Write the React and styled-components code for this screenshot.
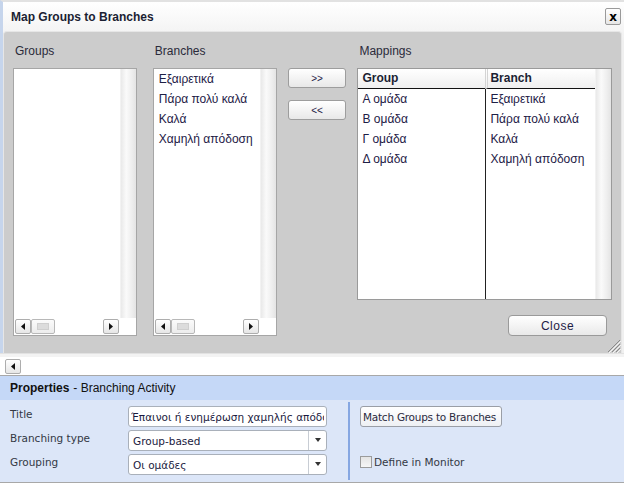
import React from 'react';
import styled, { createGlobalStyle } from 'styled-components';

const GlobalStyle = createGlobalStyle`
  html, body { margin: 0; padding: 0; background: #ffffff; }
  body {
    width: 624px; height: 484px; overflow: hidden;
    font-family: "Liberation Sans", Arial, sans-serif;
  }
  * { box-sizing: border-box; }
`;

const Screen = styled.div`
  width: 624px;
  height: 484px;
  display: flex;
  flex-direction: column;
  overflow: hidden;
`;

const Dialog = styled.div`
  height: 353px;
  display: flex;
  flex-direction: column;
  border-left: 3px solid #c6d5ec;
  border-top: 2px solid #e2e2e2;
  background: linear-gradient(#ffffff, #f0f0f0 40px);
`;

const TitleBar = styled.div`
  height: 29px;
  display: flex;
  align-items: center;
  justify-content: space-between;
  padding: 0 3px 0 8px;
`;

const Title = styled.div`
  font-weight: bold;
  font-size: 12px;
  color: #1b1f33;
`;

const CloseX = styled.div`
  width: 16px;
  height: 17px;
  border: 1px solid #9a9a9a;
  border-radius: 2px;
  background: linear-gradient(#ffffff, #e6e6e6);
  display: flex;
  align-items: center;
  justify-content: center;
  font: bold 12px "DejaVu Sans", sans-serif;
  color: #000;
`;

const Body = styled.div`
  position: relative;
  flex: 1;
  margin-right: 2px;
  background: #cccccc;
  border: 1px solid #e6e6e6;
  border-bottom: none;
  border-radius: 4px 4px 0 0;
  padding: 12px 9px 0 9px;
  display: flex;
  align-items: flex-start;
`;

const Column = styled.div`
  width: ${p => p.$w}px;
  margin-right: ${p => p.$mr || 0}px;
  display: flex;
  flex-direction: column;
`;

const Label = styled.div`
  height: 14px;
  line-height: 15px;
  margin-bottom: 10px;
  padding-left: 2px;
  font-size: 12px;
  color: #2a2a3a;
`;

const ListBox = styled.div`
  height: 268px;
  border: 1px solid #a6a6a6;
  background: #ffffff;
  display: grid;
  grid-template-columns: 1fr 16px;
  grid-template-rows: 1fr 17px;
`;

const Items = styled.div`
  padding: 0 5px;
`;

const Item = styled.div`
  height: 20px;
  line-height: 20px;
  font-size: 12px;
  color: #1e2046;
  white-space: nowrap;
`;

const VTrack = styled.div`
  background: linear-gradient(to right, #e9e9e9, #fafafa 35%, #efefef 70%, #e4e4e4);
  border-left: 1px solid #f2f2f2;
`;

const HBar = styled.div`
  display: flex;
  align-items: center;
  padding: 1px;
`;

const ArrowBtn = styled.div`
  width: 16px;
  height: 15px;
  border: 1px solid #adadad;
  border-radius: 2px;
  background: linear-gradient(#ffffff, #e6e6e6);
  display: flex;
  align-items: center;
  justify-content: center;
  flex-shrink: 0;
`;

const Thumb = styled.div`
  width: 24px;
  height: 15px;
  border: 1px solid #b8b8b8;
  border-radius: 2px;
  background: linear-gradient(#fbfbfb, #ececec);
  display: flex;
  align-items: center;
  justify-content: center;
  &::after {
    content: "";
    width: 10px;
    height: 5px;
    background: #dcdcdc;
    border: 1px solid #cfcfcf;
  }
`;

const Spacer = styled.div`
  flex: 1;
`;

const Corner = styled.div`
  background: #ffffff;
`;

const MoveButtons = styled.div`
  margin-top: 24px;
  display: flex;
  flex-direction: column;
  gap: 12px;
`;

const SmallButton = styled.div`
  height: 20px;
  border: 1px solid #9d9d9d;
  border-radius: 3px;
  background: linear-gradient(#ffffff, #e8e8e8);
  display: flex;
  align-items: center;
  justify-content: center;
  font: 10px "Liberation Sans", Arial, sans-serif;
  color: #1e2046;
`;

const Table = styled.div`
  height: 232px;
  border: 1px solid #9a9a9a;
  background: #ffffff;
  display: grid;
  grid-template-columns: 127px 1fr 16px;
  grid-template-rows: 20px 1fr;
`;

const HeadCell = styled.div`
  background: linear-gradient(#ffffff, #efefef);
  border-bottom: 1px solid #111;
  border-left: ${p => (p.$divider ? '3px double #d4d4d4' : 'none')};
  padding-left: ${p => (p.$divider ? 2 : 4)}px;
  font-weight: bold;
  font-size: 12px;
  line-height: 18px;
  color: #1b1f33;
`;

const DataCol = styled.div`
  border-left: ${p => (p.$divider ? '1px solid #222' : 'none')};
  padding-left: 4px;
`;

const TableTrack = styled(VTrack)`
  grid-row: 1 / span 2;
  grid-column: 3;
`;

const CloseButton = styled.div`
  align-self: flex-end;
  margin: 15px 5px 0 0;
  width: 99px;
  height: 21px;
  border: 1px solid #9a9a9a;
  border-radius: 4px;
  background: linear-gradient(#ffffff, #e9e9e9);
  display: flex;
  align-items: center;
  justify-content: center;
  font-size: 12px;
  color: #1e2046;
  letter-spacing: 0.5px;
`;

const Grip = styled.svg`
  position: absolute;
  right: 0;
  bottom: 0;
`;

const PageScroll = styled.div`
  height: 23px;
  border-top: 1px solid #e2e2e2;
  border-bottom: 1px solid #a8a8a8;
  background: linear-gradient(#f3f3f3 0, #f3f3f3 3px, #ffffff 3px);
  display: flex;
  align-items: center;
  padding: 3px 0 0 5px;
`;

const PropsHeader = styled.div`
  height: 24px;
  background: #c5d8f7;
  display: flex;
  align-items: center;
  padding-left: 10px;
  font-size: 12px;
  color: #111;
  b { font-weight: bold; margin-right: 4px; }
`;

const PropsPanel = styled.div`
  flex: 1;
  background: #dce6f8;
  border-bottom: 1px solid #a8a8a8;
  margin-bottom: 1px;
  display: flex;
  font-family: "DejaVu Sans", Verdana, sans-serif;
  font-size: 10.5px;
`;

const FormLeft = styled.div`
  width: 348px;
  padding: 6px 0 0 10px;
  display: grid;
  grid-template-columns: 118px 199px;
  grid-auto-rows: 21px;
  row-gap: 3px;
  align-content: start;
`;

const FieldLabel = styled.div`
  line-height: 16px;
  color: #333844;
`;

const TextField = styled.input`
  width: 199px;
  height: 21px;
  border: 1px solid #a9b0ba;
  border-radius: 3px;
  background: #ffffff;
  padding: 0 2px;
  font: inherit;
  color: #1a1a40;
  outline: none;
`;

const Select = styled.div`
  height: 21px;
  border: 1px solid #a9b0ba;
  border-radius: 3px;
  background: #ffffff;
  display: flex;
  align-items: center;
  color: #1a1a40;
  span { flex: 1; padding-left: 4px; white-space: nowrap; }
`;

const DropBtn = styled.div`
  width: 18px;
  height: 100%;
  border-left: 1px solid #c8cdd4;
  display: flex;
  align-items: center;
  justify-content: center;
`;

const FormRight = styled.div`
  margin: 2px 0 2px;
  border-left: 2px solid #86a7e2;
  padding: 4px 0 0 10px;
  display: flex;
  flex-direction: column;
  align-items: flex-start;
`;

const MatchButton = styled.div`
  height: 21px;
  padding: 0 5px 0 2px;
  border: 1px solid #9a9ea6;
  border-radius: 3px;
  background: linear-gradient(#ffffff, #eef0f4);
  display: flex;
  align-items: center;
  color: #2a2a40;
  letter-spacing: -0.25px;
`;

const CheckRow = styled.label`
  margin-top: 29px;
  display: flex;
  align-items: center;
  color: #333844;
`;

const CheckBox = styled.span`
  width: 12px;
  height: 12px;
  margin-right: 2px;
  border: 1px solid #9b9b9b;
  background: linear-gradient(#e4e4e4, #f6f6f6);
`;

const Tri = ({ dir }) => (
  <svg width="6" height="7" viewBox="0 0 6 7">
    {dir === 'left' && <path d="M5 0 L1 3.5 L5 7 Z" fill="#111" />}
    {dir === 'right' && <path d="M1 0 L5 3.5 L1 7 Z" fill="#111" />}
    {dir === 'down' && <path d="M0 1 L6 1 L3 5 Z" fill="#333" />}
  </svg>
);

function ScrollList({ items = [] }) {
  return (
    <ListBox>
      <Items>
        {items.map(t => <Item key={t}>{t}</Item>)}
      </Items>
      <VTrack />
      <HBar>
        <ArrowBtn><Tri dir="left" /></ArrowBtn>
        <Thumb />
        <Spacer />
        <ArrowBtn><Tri dir="right" /></ArrowBtn>
      </HBar>
      <Corner />
    </ListBox>
  );
}

const branches = ['Εξαιρετικά', 'Πάρα πολύ καλά', 'Καλά', 'Χαμηλή απόδοση'];
const groups = ['Α ομάδα', 'Β ομάδα', 'Γ ομάδα', 'Δ ομάδα'];

export default function App() {
  return (
    <>
      <GlobalStyle />
      <Screen>
        <Dialog>
          <TitleBar>
            <Title>Map Groups to Branches</Title>
            <CloseX>x</CloseX>
          </TitleBar>
          <Body>
            <Column $w={124} $mr={16}>
              <Label>Groups</Label>
              <ScrollList />
            </Column>
            <Column $w={124} $mr={11}>
              <Label>Branches</Label>
              <ScrollList items={branches} />
            </Column>
            <Column $w={59} $mr={11}>
              <MoveButtons>
                <SmallButton>&gt;&gt;</SmallButton>
                <SmallButton>&lt;&lt;</SmallButton>
              </MoveButtons>
            </Column>
            <Column $w={255}>
              <Label>Mappings</Label>
              <Table>
                <HeadCell>Group</HeadCell>
                <HeadCell $divider>Branch</HeadCell>
                <TableTrack />
                <DataCol>
                  {groups.map(t => <Item key={t}>{t}</Item>)}
                </DataCol>
                <DataCol $divider>
                  {branches.map(t => <Item key={t}>{t}</Item>)}
                </DataCol>
              </Table>
              <CloseButton>Close</CloseButton>
            </Column>
            <Grip width="16" height="16" viewBox="0 0 16 16">
              <path d="M15 3 L3 15 M15 7 L7 15 M15 11 L11 15" stroke="#8a8a8a" strokeWidth="1" />
              <path d="M16 4 L4 16 M16 8 L8 16 M16 12 L12 16" stroke="#f4f4f4" strokeWidth="1" />
            </Grip>
          </Body>
        </Dialog>
        <PageScroll>
          <ArrowBtn><Tri dir="left" /></ArrowBtn>
        </PageScroll>
        <PropsHeader>
          <b>Properties</b> - Branching Activity
        </PropsHeader>
        <PropsPanel>
          <FormLeft>
            <FieldLabel>Title</FieldLabel>
            <TextField readOnly value="Έπαινοι ή ενημέρωση χαμηλής απόδοσης" />
            <FieldLabel>Branching type</FieldLabel>
            <Select>
              <span>Group-based</span>
              <DropBtn><Tri dir="down" /></DropBtn>
            </Select>
            <FieldLabel>Grouping</FieldLabel>
            <Select>
              <span>Οι ομάδες</span>
              <DropBtn><Tri dir="down" /></DropBtn>
            </Select>
          </FormLeft>
          <FormRight>
            <MatchButton>Match Groups to Branches</MatchButton>
            <CheckRow>
              <CheckBox />
              Define in Monitor
            </CheckRow>
          </FormRight>
        </PropsPanel>
      </Screen>
    </>
  );
}
